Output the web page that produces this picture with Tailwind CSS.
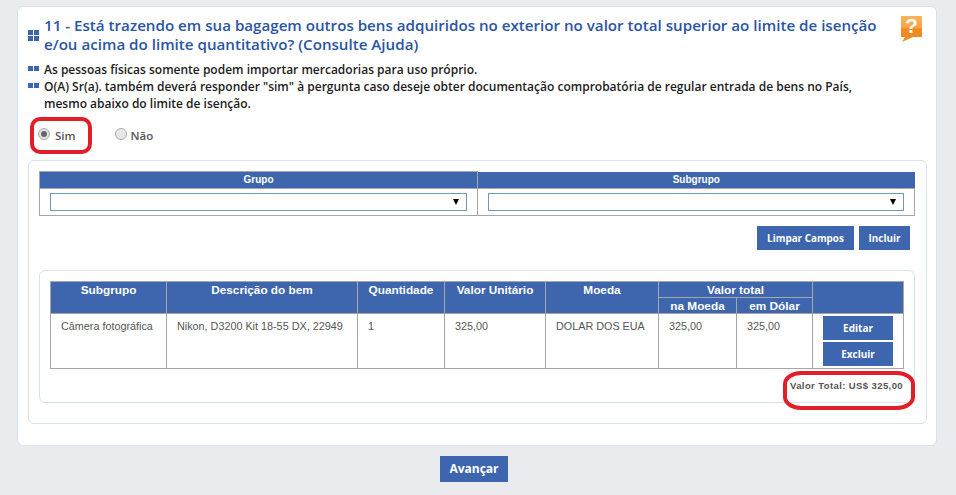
<!DOCTYPE html>
<html lang="pt-BR">
  <head>
    <meta charset="UTF-8" />
    <title>Bens adquiridos no exterior</title>
    <script src="https://cdn.jsdelivr.net/npm/@tailwindcss/browser@4"></script>
  </head>
  <body class="bg-[#e9ebee] h-[495px] w-[956px] overflow-hidden relative font-['Open_Sans',sans-serif]">
    <div class="pt-[6px] pl-[17px]">
      <!-- card principal -->
      <div class="w-[920px] h-[440px] bg-white border border-[#d3e2ec] rounded-md pt-[8px] pl-[10px] pr-[10px]">
        <div class="flex items-start">
          <div class="w-[16px] pt-[15px] shrink-0">
            <div class="grid grid-cols-2 gap-px w-[11px]">
              <span class="h-[5px] bg-[#3d66ae]"></span><span class="h-[5px] bg-[#3d66ae]"></span>
              <span class="h-[5px] bg-[#3d66ae]"></span><span class="h-[5px] bg-[#3d66ae]"></span>
            </div>
          </div>
          <h1 class="w-[850px] text-[15.15px] leading-[19px] font-semibold text-[#2a55a3] pt-[1px]">
            11 - Está trazendo em sua bagagem outros bens adquiridos no exterior no valor total superior ao limite de isenção e/ou acima do limite quantitativo? (Consulte Ajuda)
          </h1>
          <svg class="ml-[7px] mt-[1px] shrink-0 overflow-visible" width="21" height="26" viewBox="0 0 21 26">
            <defs>
              <linearGradient id="ajuda" x1="0" y1="0" x2="0" y2="1">
                <stop offset="0" stop-color="#fbb25c" />
                <stop offset="0.45" stop-color="#f9a33f" />
                <stop offset="0.5" stop-color="#f18a22" />
                <stop offset="1" stop-color="#f08a24" />
              </linearGradient>
            </defs>
            <path d="M0 0H21V21H12L1 26L4 21H0Z" fill="url(#ajuda)" />
            <text x="10.5" y="17" text-anchor="middle" font-size="21" font-weight="700" fill="#fff" font-family="Liberation Sans">?</text>
          </svg>
        </div>

        <div class="mt-[7px] text-[12px] leading-[17px] font-semibold text-[#1c1c1c]">
          <div class="flex items-start">
            <div class="w-[16px] shrink-0 flex gap-px pt-[5px]">
              <span class="w-[5px] h-[5px] bg-[#3d66ae]"></span><span class="w-[5px] h-[5px] bg-[#3d66ae]"></span>
            </div>
            <p>As pessoas físicas somente podem importar mercadorias para uso próprio.</p>
          </div>
          <div class="flex items-start">
            <div class="w-[16px] shrink-0 flex gap-px pt-[5px]">
              <span class="w-[5px] h-[5px] bg-[#3d66ae]"></span><span class="w-[5px] h-[5px] bg-[#3d66ae]"></span>
            </div>
            <p class="w-[830px]">O(A) Sr(a). também deverá responder "sim" à pergunta caso deseje obter documentação comprobatória de regular entrada de bens no País, mesmo abaixo do limite de isenção.</p>
          </div>
        </div>

        <!-- sim / nao -->
        <div class="mt-[12px] ml-[10px] h-[20px] flex items-center text-[11.5px] font-semibold text-[#555]">
          <span class="w-[12px] h-[12px] rounded-full border border-[#aaa] bg-[#e4e4e4] flex items-center justify-center">
            <span class="w-[6px] h-[6px] rounded-full bg-[#666]"></span>
          </span>
          <span class="ml-[5px] mt-[3px]">Sim</span>
          <span class="ml-[39px] w-[12px] h-[12px] rounded-full border border-[#aaa] bg-[#e8e8e8]"></span>
          <span class="ml-[4px] mt-[3px]">Não</span>
        </div>

        <!-- painel do bem -->
        <div class="mt-[16px] w-[899px] h-[264px] border border-[#d5e3ec] rounded-md pt-[10px] pl-[10px]">
          <table class="w-[875px] border-collapse table-fixed font-['Liberation_Sans',sans-serif]">
            <tbody>
              <tr class="h-[17px] bg-[#3d66ae] text-white text-[10px] leading-[12px] font-bold text-center">
                <th class="w-[438px] border border-[#a6a6a6]">Grupo</th>
                <th class="w-[437px] pt-px">Subgrupo</th>
              </tr>
              <tr class="h-[27px]">
                <td class="border border-[#a6a6a6] px-[10px]">
                  <div class="h-[18px] border border-[#6f9cb3] flex items-center justify-end pr-[7px]">
                    <span class="w-0 h-0 border-l-[3.5px] border-r-[3.5px] border-t-[6px] border-l-transparent border-r-transparent border-t-black"></span>
                  </div>
                </td>
                <td class="border border-[#a6a6a6] px-[10px]">
                  <div class="h-[18px] border border-[#6f9cb3] flex items-center justify-end pr-[7px]">
                    <span class="w-0 h-0 border-l-[3.5px] border-r-[3.5px] border-t-[6px] border-l-transparent border-r-transparent border-t-black"></span>
                  </div>
                </td>
              </tr>
            </tbody>
          </table>

          <div class="mt-[10px] w-[871px] flex justify-end gap-[5px] text-white text-[9.9px] font-bold font-['Open_Sans',sans-serif]">
            <button class="w-[97px] h-[24px] bg-[#3d66ae]">Limpar Campos</button>
            <button class="w-[51px] h-[24px] bg-[#3d66ae]">Incluir</button>
          </div>

          <!-- lista de bens -->
          <div class="mt-[20px] w-[876px] h-[133px] border border-[#d5e3ec] rounded-md pt-[10px] pl-[10px] font-['Liberation_Sans',sans-serif]">
            <table class="w-[853px] border-collapse table-fixed text-[#555] text-[10.8px]">
              <colgroup>
                <col class="w-[116px]" />
                <col class="w-[191px]" />
                <col class="w-[87px]" />
                <col class="w-[101px]" />
                <col class="w-[113px]" />
                <col class="w-[78px]" />
                <col class="w-[76px]" />
                <col class="w-[91px]" />
              </colgroup>
              <thead class="bg-[#3d66ae] text-white text-[11.8px] font-bold">
                <tr class="h-[16px] leading-[14px]">
                  <th rowspan="2" class="border border-[#a6a6a6] align-top pt-px">Subgrupo</th>
                  <th rowspan="2" class="border border-[#a6a6a6] align-top pt-px">Descrição do bem</th>
                  <th rowspan="2" class="border border-[#a6a6a6] align-top pt-px">Quantidade</th>
                  <th rowspan="2" class="border border-[#a6a6a6] align-top pt-px">Valor Unitário</th>
                  <th rowspan="2" class="border border-[#a6a6a6] align-top pt-px">Moeda</th>
                  <th colspan="2" class="border border-[#a6a6a6]">Valor total</th>
                  <th rowspan="2" class="border border-[#a6a6a6]"></th>
                </tr>
                <tr class="h-[16px] leading-[14px]">
                  <th class="border border-[#a6a6a6]">na Moeda</th>
                  <th class="border border-[#a6a6a6]">em Dólar</th>
                </tr>
              </thead>
              <tbody>
                <tr class="h-[55px]">
                  <td class="border border-[#a6a6a6] align-top pl-[10px] pt-[4px]">Câmera fotográfica</td>
                  <td class="border border-[#a6a6a6] align-top pl-[10px] pt-[4px]">Nikon, D3200 Kit 18-55 DX, 22949</td>
                  <td class="border border-[#a6a6a6] align-top pl-[10px] pt-[4px]">1</td>
                  <td class="border border-[#a6a6a6] align-top pl-[10px] pt-[4px]">325,00</td>
                  <td class="border border-[#a6a6a6] align-top pl-[10px] pt-[4px]">DOLAR DOS EUA</td>
                  <td class="border border-[#a6a6a6] align-top pl-[10px] pt-[4px]">325,00</td>
                  <td class="border border-[#a6a6a6] align-top pl-[10px] pt-[4px]">325,00</td>
                  <td class="border border-[#a6a6a6] align-top pt-[2px]">
                    <div class="flex flex-col items-center gap-[2px] text-white text-[10px] font-bold font-['Open_Sans',sans-serif]">
                      <button class="w-[70px] h-[24px] bg-[#3d66ae]">Editar</button>
                      <button class="w-[70px] h-[24px] bg-[#3d66ae]">Excluir</button>
                    </div>
                  </td>
                </tr>
              </tbody>
            </table>
            <p class="mt-[10px] w-[853px] text-right text-[9.5px] font-bold text-[#555] tracking-[0.4px]">Valor Total: US$ 325,00</p>
          </div>
        </div>
      </div>

      <div class="mt-[10px] w-[920px] flex justify-center pr-[6px]">
        <button class="w-[68px] h-[26px] bg-[#3d66ae] text-white text-[12px] font-bold">Avançar</button>
      </div>
    </div>

    <!-- marcacoes em vermelho sobre a tela -->
    <div class="absolute left-[30px] top-[117px] w-[62px] h-[37px] border-4 border-[#e01f28] rounded-[10px]"></div>
    <div class="absolute left-[783px] top-[371px] w-[132px] h-[39px] border-4 border-[#e01f28] rounded-[18px/13px]"></div>
  </body>
</html>
